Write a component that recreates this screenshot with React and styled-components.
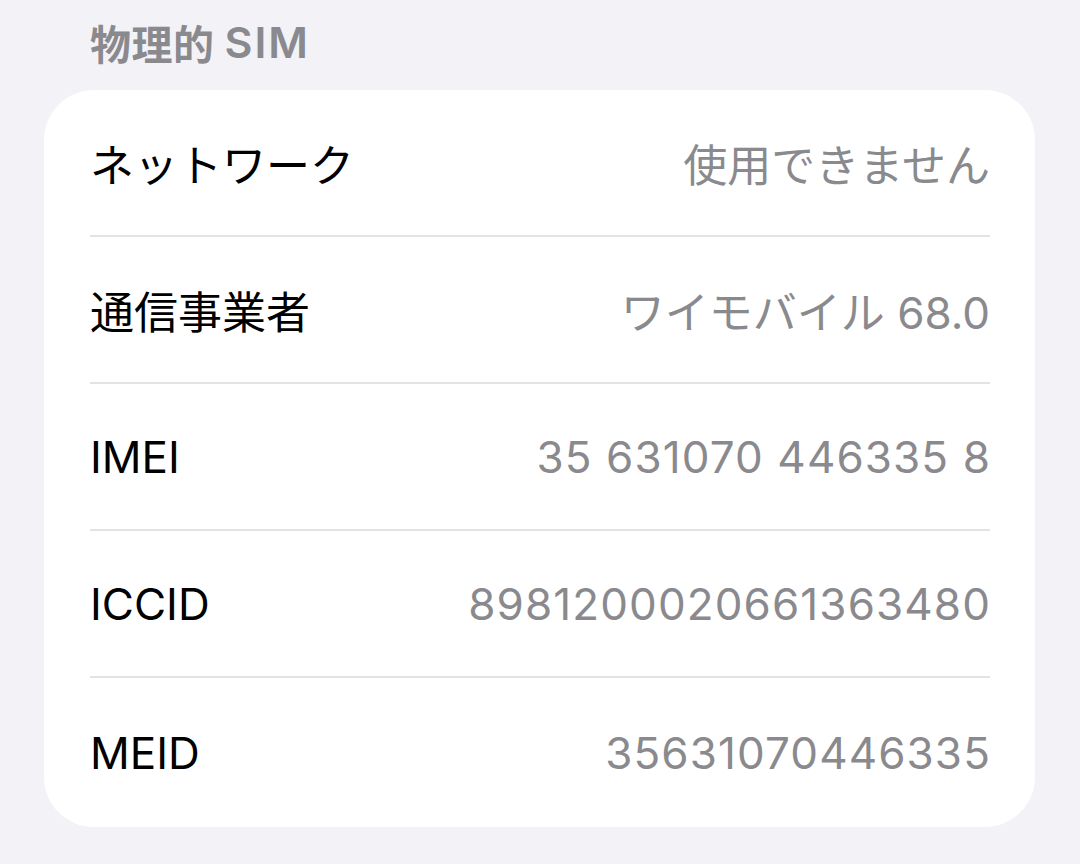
import React from "react";
import styled, { createGlobalStyle } from "styled-components";

const Global = createGlobalStyle`
  html, body { margin: 0; padding: 0; background: #f2f2f7; }
  body { font-family: "Inter", "Noto Sans CJK JP", sans-serif; -webkit-font-smoothing: antialiased; }
`;

const Page = styled.div`
  width: 1080px;
  height: 864px;
  background: #f2f2f7;
  display: flex;
  flex-direction: column;
  overflow: hidden;
`;

const SectionHeader = styled.div`
  height: 90px;
  display: flex;
  align-items: center;
  padding: 0 0 6px 90px;
  box-sizing: border-box;
  font-size: 41px;
  font-weight: 600;
  color: #8a8a8e;
  letter-spacing: 0.5px;
`;

const Latin = styled.span`
  margin-left: 10px;
  font-size: 43px;
  letter-spacing: 2px;
`;

const Card = styled.div`
  margin: 0 45px 0 44px;
  background: #ffffff;
  border-radius: 50px;
  padding: 0 45px 0 46px;
  display: flex;
  flex-direction: column;
`;

const Row = styled.div`
  height: ${(p) => (p.$last ? 149 : 147)}px;
  display: flex;
  align-items: center;
  justify-content: space-between;
  border-bottom: ${(p) => (p.$last ? "none" : "2px solid #e3e3e6")};
  box-sizing: border-box;
  font-size: 44px;
`;

const Label = styled.span`
  color: #000;
`;

const Value = styled.span`
  color: #8a8a8e;
  letter-spacing: ${(p) => (p.$numeric ? "1.1px" : "0")};
  margin-right: ${(p) => (p.$numeric ? "-1px" : "0")};
`;

const rows = [
  ["ネットワーク", "使用できません", false],
  ["通信事業者", "ワイモバイル 68.0", false],
  ["IMEI", "35 631070 446335 8", true],
  ["ICCID", "8981200020661363480", true],
  ["MEID", "35631070446335", true],
];

export default function App() {
  return (
    <Page>
      <Global />
      <SectionHeader>
        物理的<Latin>SIM</Latin>
      </SectionHeader>
      <Card>
        {rows.map(([l, v, n], i) => (
          <Row key={l} $last={i === rows.length - 1}>
            <Label>{l}</Label>
            <Value $numeric={n}>{v}</Value>
          </Row>
        ))}
      </Card>
    </Page>
  );
}
